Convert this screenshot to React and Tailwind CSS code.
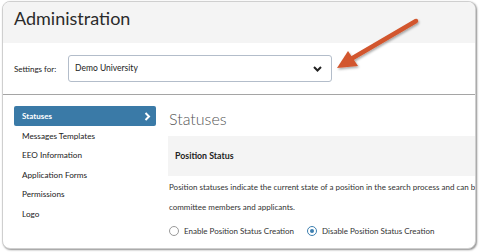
import React from "react";

const font = { fontFamily: "Lato, 'Open Sans', sans-serif" };

function Radio({ checked }) {
  return checked ? (
    <span className="shrink-0 w-[10px] h-[10px] rounded-full border-[1.5px] border-[#3d7fb0] flex items-center justify-center bg-white">
      <span className="w-[4px] h-[4px] rounded-full bg-[#3d7fb0]" />
    </span>
  ) : (
    <span className="shrink-0 block w-[10px] h-[10px] rounded-full border border-[#9a9a9a] bg-white" />
  );
}

export default function App() {
  const items = ["Messages Templates", "EEO Information", "Application Forms", "Permissions", "Logo"];
  return (
    <div className="w-[479px] h-[252px] bg-white relative overflow-hidden pt-[1px] pl-[2px]" style={font}>
      <div className="w-[474px] h-[248px] border border-[#cfcfcf] rounded-[8px] overflow-hidden bg-white shadow-[1px_1px_2px_rgba(0,0,0,0.45)] flex flex-col">
        <div className="h-[41px] shrink-0 bg-[#f4f4f4] flex items-center pl-[11px] pb-[10px]">
          <span className="text-[18px] text-[#2b2b2b] leading-none">Administration</span>
        </div>
        <div className="h-[52px] shrink-0 flex items-center pl-[11px] border-b-[1.5px] border-[#a5a5a5]">
          <span className="text-[8px] text-[#222] w-[54px]">Settings for:</span>
          <div className="w-[264px] h-[27px] border border-[#b3bdca] rounded-[3px] flex items-center justify-between pl-[6px] pr-[9px]">
            <span className="text-[8.5px] text-[#222]">Demo University</span>
            <svg width="9" height="6" viewBox="0 0 9 6"><path d="M1 1 L4.5 4.5 L8 1" fill="none" stroke="#222" strokeWidth="2" /></svg>
          </div>
        </div>
        <div className="flex flex-1 pt-[11px]">
          <div className="w-[142px] shrink-0 ml-[11px] flex flex-col">
            <div className="h-[20px] bg-[#3a7aa7] rounded-[2px] flex items-center justify-between pl-[8px] pr-[5px]">
              <span className="text-[8px] font-bold text-white">Statuses</span>
              <svg width="7" height="9" viewBox="0 0 7 9"><path d="M1.5 1 L5 4.5 L1.5 8" fill="none" stroke="#fff" strokeWidth="2" /></svg>
            </div>
            {items.map((t) => (
              <div key={t} className="h-[19.6px] flex items-center pl-[8px] text-[8.2px] text-[#222]">{t}</div>
            ))}
          </div>
          <div className="flex-1 ml-[12px] min-w-0">
            <div className="text-[16px] font-light text-[#555] leading-none mt-[5px] h-[20px] pl-[1px]">Statuses</div>
            <div className="h-[40px] bg-[#f4f4f4] flex items-center pl-[7px] mt-[5px]">
              <span className="text-[8.8px] font-bold text-[#222]">Position Status</span>
            </div>
            <div className="mt-[1px] pl-[1px] text-[8px] text-[#333] leading-[20px] whitespace-nowrap">
              <div>Position statuses indicate the current state of a position in the search process and can be seen by</div>
              <div>committee members and applicants.</div>
            </div>
            <div className="flex items-center mt-[8px] pl-[1px] text-[8px] text-[#333] whitespace-nowrap">
              <Radio />
              <span className="ml-[5px]">Enable Position Status Creation</span>
              <span className="ml-[13px] shrink-0"><Radio checked /></span>
              <span className="ml-[5px]">Disable Position Status Creation</span>
            </div>
          </div>
        </div>
      </div>
      <svg className="absolute left-0 top-0 pointer-events-none" width="479" height="252">
        <defs>
          <filter id="sh" x="-20%" y="-20%" width="140%" height="140%">
            <feDropShadow dx="1" dy="1.5" stdDeviation="1.2" floodColor="#000" floodOpacity="0.35" />
          </filter>
        </defs>
        <g filter="url(#sh)">
          <path d="M416 21 L351 59" stroke="#d2562d" strokeWidth="4.5" strokeLinecap="round" />
          <path d="M337 68 L348 51 L358 66 Z" fill="#d2562d" />
        </g>
      </svg>
    </div>
  );
}
